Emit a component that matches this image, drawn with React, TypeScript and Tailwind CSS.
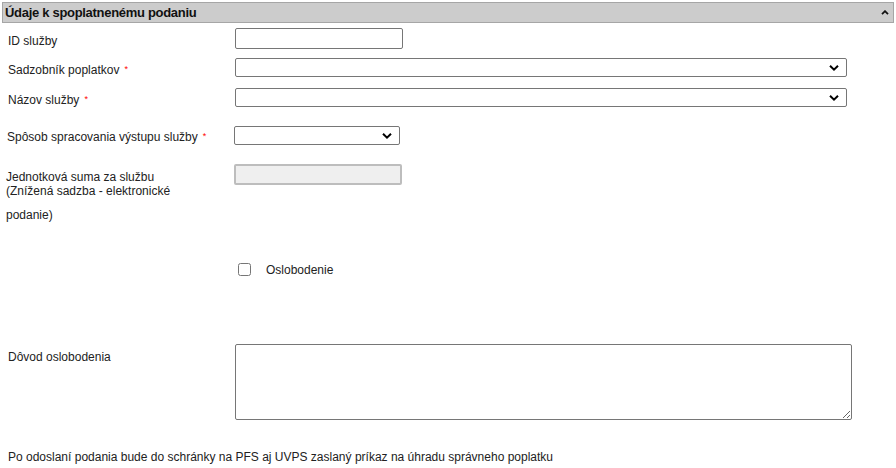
import React from "react";

const Req = () => (
  <span className="ml-[5px] text-[9px] text-[#ff0000] relative top-[-2px]">*</span>
);

const Chevron = () => (
  <svg width="10" height="7" viewBox="0 0 10 7" className="absolute right-[8px] top-1/2 -translate-y-1/2 pointer-events-none">
    <path d="M1 1.3 L5 5.2 L9 1.3" fill="none" stroke="#000" strokeWidth="2" />
  </svg>
);

const Select = ({ w }: { w: string }) => (
  <div className={`relative h-[19px] ${w}`}>
    <select className="appearance-none h-full w-full border border-[#767676] rounded-[2px] bg-white" />
    <Chevron />
  </div>
);

export default function App() {
  return (
    <div
      className="w-[896px] h-[468px] bg-white text-[12px] text-[#222] overflow-hidden"
      style={{ fontFamily: '"Liberation Sans", Arial, sans-serif' }}
    >
      <div className="mx-[2px] mt-[2px] h-[21px] bg-[#cccccc] border border-[#a6a6a6] flex items-center justify-between pl-[2px] pr-[4px]">
        <span className="font-bold text-[13px] text-[#111] tracking-[-0.3px]">Údaje k spoplatnenému podaniu</span>
        <svg width="8" height="5" viewBox="0 0 8 5">
          <path d="M1 4.2 L4 1.2 L7 4.2" fill="none" stroke="#111" strokeWidth="1.8" />
        </svg>
      </div>

      <div className="flex items-center mt-[5px] h-[21px]">
        <div className="w-[235px] pl-[8px] pt-[4px]">ID služby</div>
        <input className="w-[168px] h-[21px] border border-[#767676] rounded-[2px]" />
      </div>

      <div className="flex items-center mt-[9px] h-[19px]">
        <div className="w-[235px] pl-[8px] pt-[4px]">Sadzobník poplatkov<Req /></div>
        <Select w="w-[612px]" />
      </div>

      <div className="flex items-center mt-[11px] h-[19px]">
        <div className="w-[235px] pl-[8px] pt-[4px]">Názov služby<Req /></div>
        <Select w="w-[612px]" />
      </div>

      <div className="flex items-center mt-[19px] h-[19px]">
        <div className="w-[234px] pl-[7px] pt-[3px]">Spôsob spracovania výstupu služby<Req /></div>
        <Select w="w-[166px]" />
      </div>

      <div className="flex items-start mt-[19px]">
        <div className="w-[234px] pl-[6px] pt-[6px] leading-[14px]">
          <div>Jednotková suma za službu</div>
          <div>(Znížená sadzba - elektronické</div>
          <div className="mt-[10px]">podanie)</div>
        </div>
        <input
          disabled
          className="w-[168px] h-[21px] border-2 border-[#bdbdbd] bg-[#efefef] rounded-[2px]"
        />
      </div>

      <div className="flex items-center mt-[40px] pl-[238px] h-[14px]">
        <input type="checkbox" className="w-[13px] h-[13px] m-0" />
        <span className="ml-[15px] pt-[1px]">Oslobodenie</span>
      </div>

      <div className="flex items-start mt-[68px]">
        <div className="w-[235px] pl-[8px] pt-[4px]">Dôvod oslobodenia</div>
        <textarea className="w-[617px] h-[76px] border border-[#767676] rounded-[2px] resize" />
      </div>

      <div className="pl-[8px] mt-[28px]">
        Po odoslaní podania bude do schránky na PFS aj UVPS zaslaný príkaz na úhradu správneho poplatku
      </div>
    </div>
  );
}
